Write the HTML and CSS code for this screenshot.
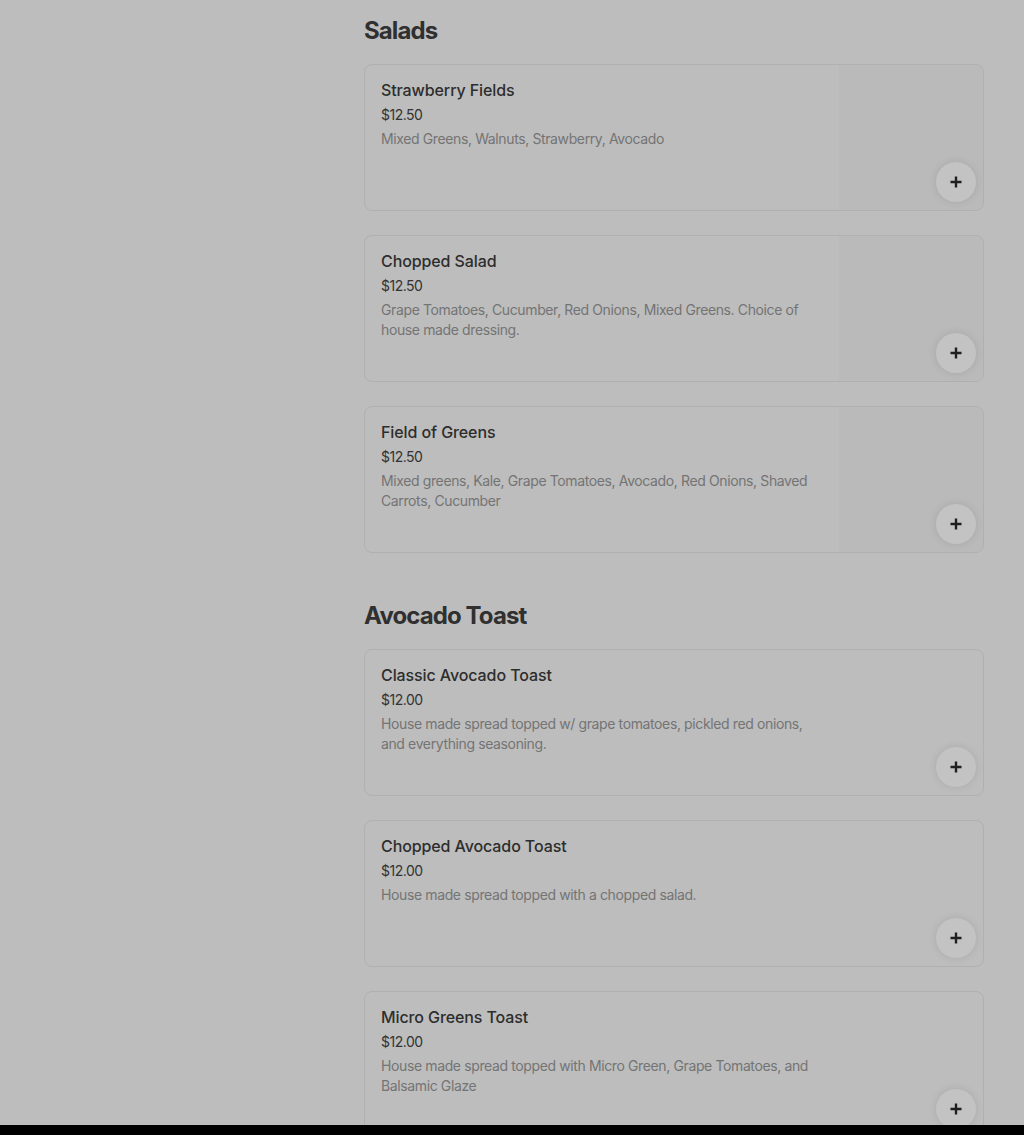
FILE: index.html
```html
<!DOCTYPE html>
<html lang="en">
<head>
<meta charset="utf-8">
<title>Menu</title>
<link rel="stylesheet" href="styles.css">
</head>
<body>
<div class="page">
  <aside class="sidebar"></aside>
  <main class="menu">
    <section class="section">
      <h2 class="section-title">Salads</h2>
      <div class="items">
        <article class="card">
          <div class="info">
            <h3 class="name">Strawberry Fields</h3>
            <div class="price">$12.50</div>
            <p class="desc">Mixed Greens, Walnuts, Strawberry, Avocado</p>
          </div>
          <div class="media has-img"><button class="add" aria-label="Add"><svg viewBox="0 0 14 14" width="14" height="14"><path d="M7 1.5v11M1.5 7h11" stroke="#1f1f1f" stroke-width="2.4" fill="none"/></svg></button></div>
        </article>
        <article class="card">
          <div class="info">
            <h3 class="name">Chopped Salad</h3>
            <div class="price">$12.50</div>
            <p class="desc">Grape Tomatoes, Cucumber, Red Onions, Mixed Greens. Choice of house made dressing.</p>
          </div>
          <div class="media has-img"><button class="add" aria-label="Add"><svg viewBox="0 0 14 14" width="14" height="14"><path d="M7 1.5v11M1.5 7h11" stroke="#1f1f1f" stroke-width="2.4" fill="none"/></svg></button></div>
        </article>
        <article class="card">
          <div class="info">
            <h3 class="name">Field of Greens</h3>
            <div class="price">$12.50</div>
            <p class="desc">Mixed greens, Kale, Grape Tomatoes, Avocado, Red Onions, Shaved Carrots, Cucumber</p>
          </div>
          <div class="media has-img"><button class="add" aria-label="Add"><svg viewBox="0 0 14 14" width="14" height="14"><path d="M7 1.5v11M1.5 7h11" stroke="#1f1f1f" stroke-width="2.4" fill="none"/></svg></button></div>
        </article>
      </div>
    </section>
    <section class="section">
      <h2 class="section-title">Avocado Toast</h2>
      <div class="items">
        <article class="card">
          <div class="info">
            <h3 class="name">Classic Avocado Toast</h3>
            <div class="price">$12.00</div>
            <p class="desc">House made spread topped w/ grape tomatoes, pickled red onions, and everything seasoning.</p>
          </div>
          <div class="media"><button class="add" aria-label="Add"><svg viewBox="0 0 14 14" width="14" height="14"><path d="M7 1.5v11M1.5 7h11" stroke="#1f1f1f" stroke-width="2.4" fill="none"/></svg></button></div>
        </article>
        <article class="card">
          <div class="info">
            <h3 class="name">Chopped Avocado Toast</h3>
            <div class="price">$12.00</div>
            <p class="desc">House made spread topped with a chopped salad.</p>
          </div>
          <div class="media"><button class="add" aria-label="Add"><svg viewBox="0 0 14 14" width="14" height="14"><path d="M7 1.5v11M1.5 7h11" stroke="#1f1f1f" stroke-width="2.4" fill="none"/></svg></button></div>
        </article>
        <article class="card">
          <div class="info">
            <h3 class="name">Micro Greens Toast</h3>
            <div class="price">$12.00</div>
            <p class="desc">House made spread topped with Micro Green, Grape Tomatoes, and Balsamic Glaze</p>
          </div>
          <div class="media"><button class="add" aria-label="Add"><svg viewBox="0 0 14 14" width="14" height="14"><path d="M7 1.5v11M1.5 7h11" stroke="#1f1f1f" stroke-width="2.4" fill="none"/></svg></button></div>
        </article>
      </div>
    </section>
  </main>
</div>
<div class="bottom-bar"></div>
</body>
</html>
```

FILE: styles.css
```css
* { box-sizing: border-box; }

html, body {
  margin: 0;
  padding: 0;
  background: #bdbdbd;
  font-family: Inter, "Liberation Sans", sans-serif;
  color: #2f2f2f;
}

.page {
  display: grid;
  grid-template-columns: 1fr 620px;
  padding: 13px 40px 0 0;
  height: 1135px;
  overflow: hidden;
}

.section + .section {
  margin-top: 45px;
}

.section-title {
  margin: 0 0 15px;
  font-size: 24px;
  line-height: 36px;
  font-weight: 700;
  letter-spacing: -0.9px;
  color: #303030;
}

.items {
  display: flex;
  flex-direction: column;
  gap: 24px;
}

.card {
  display: flex;
  height: 147px;
  border: 1px solid #b0b0b0;
  border-radius: 8px;
  overflow: hidden;
}

.info {
  flex: 1;
  padding: 15px 16px 16px 16px;
  min-width: 0;
}

.name {
  margin: 0;
  font-size: 16px;
  line-height: 20px;
  font-weight: 500;
  letter-spacing: -0.1px;
  color: #2d2d2d;
}

.price {
  margin-top: 5px;
  font-size: 14px;
  line-height: 20px;
  color: #333333;
  letter-spacing: -0.5px;
}

.desc {
  margin: 4px 0 0;
  font-size: 14px;
  line-height: 20px;
  letter-spacing: -0.38px;
  color: #747474;
}

.media {
  width: 144px;
  flex: none;
  display: flex;
  align-items: flex-end;
  justify-content: flex-end;
  padding: 8px 7px 8px 8px;
}

.media.has-img {
  background: #bababa;
}

.add {
  width: 40px;
  height: 40px;
  border-radius: 50%;
  border: none;
  background: #c3c3c3;
  box-shadow: 0 0 8px rgba(0, 0, 0, 0.1);
  display: flex;
  align-items: center;
  justify-content: center;
  padding: 0;
}

.bottom-bar {
  position: fixed;
  left: 0;
  right: 0;
  bottom: 0;
  height: 10px;
  background: #000;
}
```
